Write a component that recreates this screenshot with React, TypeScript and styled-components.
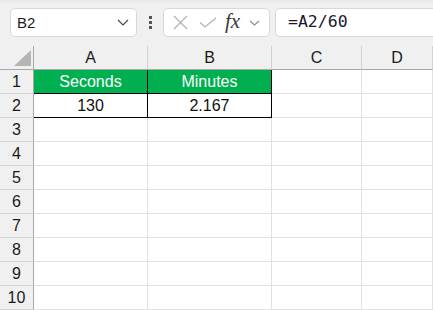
import React from "react";
import styled, { createGlobalStyle } from "styled-components";

const Global = createGlobalStyle`
  html, body { margin: 0; padding: 0; background: #ffffff; overflow: hidden; }
  body { font-family: "Liberation Sans", Arial, sans-serif; }
  * { box-sizing: border-box; }
`;

const Page = styled.div`
  width: 433px;
  height: 310px;
  display: flex;
  flex-direction: column;
  background: #ffffff;
  overflow: hidden;
`;

const Toolbar = styled.div`
  height: 46px;
  flex: 0 0 46px;
  display: flex;
  align-items: flex-start;
  padding: 8px 0 0 10px;
  background: linear-gradient(#e6e6e6 0px, #ececec 2px, #f0f0f0 4px, #f0f0f0 100%);
`;

const Field = styled.div<{ $w?: number }>`
  height: 29px;
  background: #ffffff;
  border: 1px solid #d9d9d9;
  border-radius: 5px;
  display: flex;
  align-items: center;
  ${(p) => (p.$w ? `width: ${p.$w}px; flex: 0 0 ${p.$w}px;` : "flex: 1 1 auto;")}
`;

const NameBox = styled(Field)`
  justify-content: space-between;
  padding: 0 7px 0 6px;
`;

const NameText = styled.span`
  font-family: "Liberation Sans", Arial, sans-serif;
  font-size: 15px;
  color: #1a1a1a;
  line-height: 1;
`;

const Dots = styled.div`
  width: 26px;
  height: 29px;
  display: flex;
  flex-direction: column;
  align-items: center;
  justify-content: center;
  gap: 2px;
  span {
    width: 3px;
    height: 3px;
    background: #555;
  }
`;

const FxBox = styled(Field)`
  padding: 0 0 0 7px;
  gap: 0;
`;

const IconSlot = styled.div<{ $w: number }>`
  width: ${(p) => p.$w}px;
  height: 27px;
  display: flex;
  align-items: center;
  justify-content: center;
`;

const FxText = styled.span`
  font-family: "Liberation Serif", "Times New Roman", serif;
  font-style: italic;
  font-size: 21px;
  color: #3a3a3a;
  line-height: 1;
  margin-top: -3px;
`;

const FormulaBox = styled(Field)`
  margin-left: 5px;
  margin-right: -8px;
  padding-left: 12px;
`;

const FormulaText = styled.span`
  font-family: "DejaVu Sans Mono", "Liberation Mono", monospace;
  font-size: 16.5px;
  color: #1a1a2a;
  line-height: 1;
`;

const Grid = styled.div`
  display: grid;
  grid-template-columns: 34px 114px 124px 90px 71px;
  grid-auto-rows: 24px;
`;

const Cell = styled.div<{ $fill?: string; $boxed?: boolean }>`
  display: flex;
  align-items: center;
  justify-content: center;
  font-family: "Liberation Sans", Arial, sans-serif;
  font-size: 16px;
  color: ${(p) => (p.$fill ? "#ffffff" : "#111111")};
  background: ${(p) => p.$fill || "#ffffff"};
  border-right: 1px solid ${(p) => (p.$boxed ? "#000000" : "#e1e1e1")};
  border-bottom: 1px solid ${(p) => (p.$boxed ? "#000000" : "#e1e1e1")};
  padding-top: 1px;
`;

const ColHead = styled.div`
  display: flex;
  align-items: center;
  justify-content: center;
  font-family: "Liberation Sans", Arial, sans-serif;
  font-size: 16px;
  color: #1a1a1a;
  background: #f0f0f0;
  border-right: 1px solid #d2d2d2;
  border-bottom: 1px solid #a8a8a8;
  padding-top: 1px;
`;

const Corner = styled.div`
  position: relative;
  background: #f0f0f0;
  border-right: 1px solid #a8a8a8;
  border-bottom: 1px solid #a8a8a8;
`;

const CornerTri = styled.svg`
  position: absolute;
  right: 2px;
  bottom: 3px;
`;

const RowHead = styled.div`
  display: flex;
  align-items: center;
  justify-content: center;
  font-family: "Liberation Sans", Arial, sans-serif;
  font-size: 16px;
  color: #1a1a1a;
  background: #f0f0f0;
  border-right: 1px solid #a8a8a8;
  border-bottom: 1px solid #d4d4d4;
  padding-top: 1px;
`;

const Chevron = () => (
  <svg width="12" height="7" viewBox="0 0 12 7" fill="none">
    <path d="M1 1 L6 6 L11 1" stroke="#444" strokeWidth="1.2" />
  </svg>
);

const cols = ["A", "B", "C", "D"];

type CellData = { text?: string; fill?: string; boxed?: boolean };

const rows: CellData[][] = [
  [
    { text: "Seconds", fill: "#00b050", boxed: true },
    { text: "Minutes", fill: "#00b050", boxed: true },
    {},
    {},
  ],
  [{ text: "130", boxed: true }, { text: "2.167", boxed: true }, {}, {}],
];

export default function App() {
  const allRows: CellData[][] = Array.from({ length: 10 }, (_, i) => rows[i] || [{}, {}, {}, {}]);
  return (
    <Page>
      <Global />
      <Toolbar>
        <NameBox $w={127}>
          <NameText>B2</NameText>
          <Chevron />
        </NameBox>
        <Dots>
          <span />
          <span />
          <span />
        </Dots>
        <FxBox $w={107}>
          <IconSlot $w={18}>
            <svg width="15" height="15" viewBox="0 0 15 15" fill="none">
              <path d="M1 1 L14 14 M14 1 L1 14" stroke="#b3b3b3" strokeWidth="1.3" />
            </svg>
          </IconSlot>
          <IconSlot $w={10} />
          <IconSlot $w={18}>
            <svg width="18" height="11" viewBox="0 0 18 11" fill="none">
              <path d="M1 5.5 L6 10 L17 1" stroke="#b3b3b3" strokeWidth="1.3" />
            </svg>
          </IconSlot>
          <IconSlot $w={31}>
            <FxText>fx</FxText>
          </IconSlot>
          <IconSlot $w={12}>
            <svg width="11" height="6" viewBox="0 0 11 6" fill="none">
              <path d="M1 1 L5.5 5 L10 1" stroke="#8a8a8a" strokeWidth="1.1" />
            </svg>
          </IconSlot>
        </FxBox>
        <FormulaBox>
          <FormulaText>=A2/60</FormulaText>
        </FormulaBox>
      </Toolbar>
      <Grid>
        <Corner>
          <CornerTri width="17" height="16" viewBox="0 0 17 16">
            <polygon points="17,0 17,16 0,16" fill="#b5b5b5" />
          </CornerTri>
        </Corner>
        {cols.map((c) => (
          <ColHead key={c}>{c}</ColHead>
        ))}
        {allRows.map((r, i) => (
          <React.Fragment key={i}>
            <RowHead>{i + 1}</RowHead>
            {r.map((cell, j) => (
              <Cell key={j} $fill={cell.fill} $boxed={cell.boxed}>
                {cell.text}
              </Cell>
            ))}
          </React.Fragment>
        ))}
      </Grid>
    </Page>
  );
}
